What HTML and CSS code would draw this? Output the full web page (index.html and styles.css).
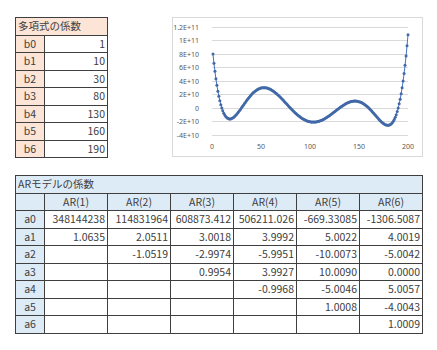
FILE: index.html
```html
<!DOCTYPE html>
<html lang="ja">
<head>
<meta charset="utf-8">
<link rel="stylesheet" href="styles.css">
</head>
<body>
<div class="page">
  <div class="top">
    <table class="sheet poly">
      <colgroup><col class="c-lab"><col class="c-val"></colgroup>
      <tr><th colspan="2" class="title peach">多項式の係数</th></tr>
      <tr><th class="peach">b0</th><td>1</td></tr>
      <tr><th class="peach">b1</th><td>10</td></tr>
      <tr><th class="peach">b2</th><td>30</td></tr>
      <tr><th class="peach">b3</th><td>80</td></tr>
      <tr><th class="peach">b4</th><td>130</td></tr>
      <tr><th class="peach">b5</th><td>160</td></tr>
      <tr><th class="peach">b6</th><td>190</td></tr>
    </table>
    <div class="chart">
      <svg id="plot" width="251" height="140" viewBox="0 0 251 140">
        <g class="grid">
          <line x1="40" x2="236" y1="10" y2="10"/>
          <line x1="40" x2="236" y1="23.5" y2="23.5"/>
          <line x1="40" x2="236" y1="37" y2="37"/>
          <line x1="40" x2="236" y1="50.5" y2="50.5"/>
          <line x1="40" x2="236" y1="64" y2="64"/>
          <line x1="40" x2="236" y1="77.5" y2="77.5"/>
          <line x1="40" x2="236" y1="91" y2="91"/>
          <line x1="40" x2="236" y1="104.5" y2="104.5"/>
          <line x1="40" x2="236" y1="118" y2="118"/>
        </g>
        <g class="ylab">
          <text x="27" y="12.5">1.2E+11</text>
          <text x="27" y="26">1E+11</text>
          <text x="27" y="39.5">8E+10</text>
          <text x="27" y="53">6E+10</text>
          <text x="27" y="66.5">4E+10</text>
          <text x="27" y="80">2E+10</text>
          <text x="27" y="93.5">0</text>
          <text x="27" y="107">-2E+10</text>
          <text x="27" y="120.5">-4E+10</text>
        </g>
        <g class="xlab">
          <text x="40" y="131.5">0</text>
          <text x="89" y="131.5">50</text>
          <text x="138" y="131.5">100</text>
          <text x="187" y="131.5">150</text>
          <text x="236" y="131.5">200</text>
        </g>
        <polyline id="curve" class="curve" points=""/>
        <g id="dots" class="dots"></g>
      </svg>
    </div>
  </div>

  <table class="sheet ar">
    <colgroup>
      <col class="c-lab"><col class="c-val"><col class="c-val"><col class="c-val"><col class="c-val"><col class="c-val"><col class="c-val">
    </colgroup>
    <tr><th colspan="7" class="title blue">ARモデルの係数</th></tr>
    <tr class="head"><th class="blue"></th><th class="blue">AR(1)</th><th class="blue">AR(2)</th><th class="blue">AR(3)</th><th class="blue">AR(4)</th><th class="blue">AR(5)</th><th class="blue">AR(6)</th></tr>
    <tr><th class="blue">a0</th><td>348144238</td><td>114831964</td><td>608873.412</td><td>506211.026</td><td>-669.33085</td><td>-1306.5087</td></tr>
    <tr><th class="blue">a1</th><td>1.0635</td><td>2.0511</td><td>3.0018</td><td>3.9992</td><td>5.0022</td><td>4.0019</td></tr>
    <tr><th class="blue">a2</th><td></td><td>-1.0519</td><td>-2.9974</td><td>-5.9951</td><td>-10.0073</td><td>-5.0042</td></tr>
    <tr><th class="blue">a3</th><td></td><td></td><td>0.9954</td><td>3.9927</td><td>10.0090</td><td>0.0000</td></tr>
    <tr><th class="blue">a4</th><td></td><td></td><td></td><td>-0.9968</td><td>-5.0046</td><td>5.0057</td></tr>
    <tr><th class="blue">a5</th><td></td><td></td><td></td><td></td><td>1.0008</td><td>-4.0043</td></tr>
    <tr><th class="blue">a6</th><td></td><td></td><td></td><td></td><td></td><td>1.0009</td></tr>
  </table>
</div>
<script src="script.js"></script>
</body>
</html>
```

FILE: styles.css
```css
html, body {
  margin: 0;
  background: #ffffff;
}
body {
  font-family: "Noto Sans CJK JP", "Noto Sans", sans-serif;
  font-size: 10.5px;
  color: #404040;
}
.page {
  padding: 17px 0 0 15px;
}
.top {
  display: flex;
  align-items: flex-start;
  gap: 64px;
}
.sheet {
  border-collapse: collapse;
  table-layout: fixed;
}
.sheet col.c-lab { width: 29px; }
.sheet col.c-val { width: 63px; }
.sheet th, .sheet td {
  border: 1px solid #3f3f3f;
  height: 16.5px;
  padding: 0 2px;
  font-weight: normal;
  line-height: 14px;
  white-space: nowrap;
  overflow: hidden;
}
.sheet th { text-align: center; }
.sheet td { text-align: right; }
.sheet th.title { text-align: left; padding-left: 2px; }
.sheet .head th { text-align: center; }
.peach { background: #fce4d6; }
.blue { background: #ddebf7; }
.ar {
  margin-top: 17px;
}
.chart {
  width: 251px;
  height: 140px;
  box-sizing: border-box;
  border: 1px solid #d9d9d9;
  background: #ffffff;
}
.chart svg {
  display: block;
  margin: -1px 0 0 -1px;
}
.grid line {
  stroke: #d9d9d9;
  stroke-width: 1;
  shape-rendering: crispEdges;
}
.ylab text {
  font-family: "Noto Sans", sans-serif;
  font-size: 7px;
  fill: #595959;
  text-anchor: end;
}
.xlab text {
  font-family: "Noto Sans", sans-serif;
  font-size: 7px;
  fill: #595959;
  text-anchor: middle;
}
.curve {
  fill: none;
  stroke: #4472c4;
  stroke-width: 1;
}
.dots circle {
  fill: #4169a8;
}
```

FILE: script.js
```js
(function () {
  var roots = [10, 30, 80, 130, 160, 190];
  var pts = [];
  var dots = document.getElementById('dots');
  var ns = 'http://www.w3.org/2000/svg';
  for (var x = 1; x <= 200; x++) {
    var v = 1;
    for (var i = 0; i < roots.length; i++) v *= (x - roots[i]);
    var px = 40 + x * 0.98;
    var py = 91 - v / 2e10 * 13.5;
    pts.push(px.toFixed(2) + ',' + py.toFixed(2));
    var c = document.createElementNS(ns, 'circle');
    c.setAttribute('cx', px.toFixed(2));
    c.setAttribute('cy', py.toFixed(2));
    c.setAttribute('r', '1.5');
    dots.appendChild(c);
  }
  document.getElementById('curve').setAttribute('points', pts.join(' '));
})();
```
